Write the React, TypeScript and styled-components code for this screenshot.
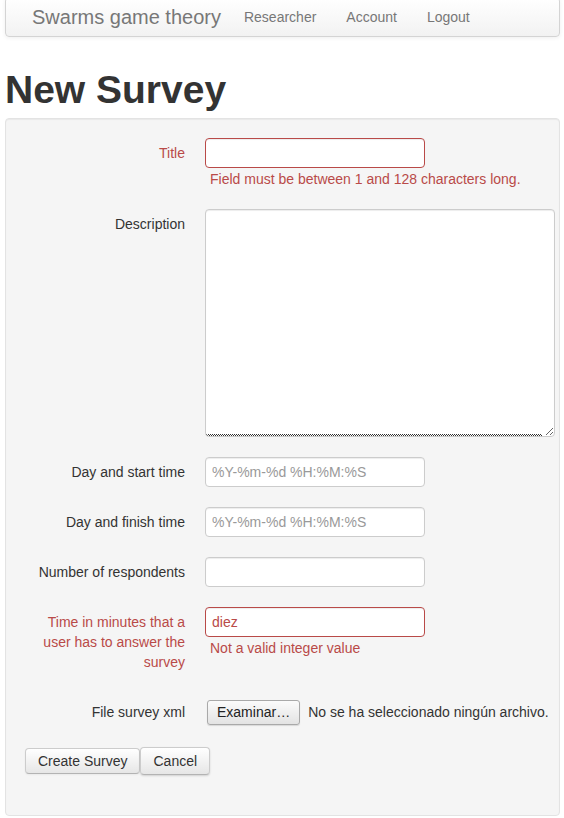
import React from "react";
import styled, { createGlobalStyle } from "styled-components";

const Global = createGlobalStyle`
  html, body { margin: 0; padding: 0; background: #fff; }
  body {
    font-family: "Liberation Sans", Arial, Helvetica, sans-serif;
    font-size: 14px;
    line-height: 20px;
    color: #333;
  }
  * { box-sizing: border-box; }
`;

const Page = styled.div`
  width: 555px;
  margin-left: 5px;
`;

const Navbar = styled.nav`
  margin-top: -3px;
  height: 40px;
  display: flex;
  align-items: center;
  padding-top: 0;
  background: linear-gradient(#ffffff, #f2f2f2);
  border: 1px solid #d4d4d4;
  border-radius: 4px;
  box-shadow: 0 1px 4px rgba(0, 0, 0, 0.065);
`;

const Brand = styled.a`
  margin-left: 6px;
  padding: 0 8px 0 20px;
  font-size: 20px;
  line-height: 20px;
  color: #777;
  text-decoration: none;
`;

const NavLink = styled.a`
  padding: 0 15px;
  font-size: 14px;
  color: #777;
  text-decoration: none;
`;

const Heading = styled.h1`
  margin: 33px 0 8px;
  font-size: 39px;
  line-height: 40px;
  font-weight: bold;
  color: #333;
`;

const Well = styled.form`
  background: #f5f5f5;
  border: 1px solid #e3e3e3;
  border-radius: 4px;
  box-shadow: inset 0 1px 1px rgba(0, 0, 0, 0.05);
  padding: 19px 19px 19px;
  min-height: 698px;
`;

const Group = styled.div<{ $pad?: number }>`
  display: grid;
  grid-template-columns: 160px 1fr;
  column-gap: 20px;
  margin-bottom: 20px;
  padding-top: ${(p) => p.$pad ?? 0}px;
`;

const Label = styled.label<{ $error?: boolean }>`
  padding-top: 5px;
  text-align: right;
  line-height: 20px;
  color: ${(p) => (p.$error ? "#b94a48" : "#333")};
`;

const Controls = styled.div`
  display: flex;
  flex-direction: column;
  align-items: flex-start;
`;

const TextInput = styled.input<{ $error?: boolean }>`
  width: 220px;
  height: 30px;
  padding: 4px 6px;
  font-family: inherit;
  font-size: 14px;
  line-height: 20px;
  color: ${(p) => (p.$error ? "#b94a48" : "#555")};
  background: #fff;
  border: 1px solid ${(p) => (p.$error ? "#b94a48" : "#ccc")};
  border-radius: 4px;
  box-shadow: inset 0 1px 1px rgba(0, 0, 0, 0.075);
  outline: none;
  &::placeholder { color: #999; }
`;

const TextArea = styled.textarea`
  width: 350px;
  height: 228px;
  padding: 4px 6px;
  font-family: inherit;
  font-size: 14px;
  color: #555;
  border: 1px solid #ccc;
  border-radius: 4px;
  box-shadow: inset 0 1px 1px rgba(0, 0, 0, 0.075);
  outline: none;
  background-color: #fff;
  background-image: repeating-linear-gradient(90deg, #333 0 1px, #fff 1px 2px),
    repeating-linear-gradient(90deg, #fff 0 1px, #333 1px 2px);
  background-size: calc(100% - 12px) 1px, calc(100% - 12px) 1px;
  background-position: left bottom 1px, left bottom;
  background-repeat: no-repeat;
`;

const Help = styled.span`
  display: block;
  margin-top: 1px;
  padding-left: 5px;
  line-height: 20px;
  color: #b94a48;
`;

const FileRow = styled.div`
  height: 30px;
  display: flex;
  align-items: center;
  gap: 8px;
  margin-left: 2px;
`;

const FileButton = styled.span`
  display: inline-flex;
  align-items: center;
  height: 25px;
  padding: 0 9px;
  font-size: 14px;
  color: #222;
  background: linear-gradient(#fbfbfb, #e3e3e3);
  border: 1px solid #a9a9a9;
  border-radius: 3px;
  box-shadow: 0 1px 1px rgba(0, 0, 0, 0.12);
`;

const FileText = styled.span`
  color: #333;
  white-space: nowrap;
`;

const Actions = styled.div`
  display: flex;
  align-items: center;
  margin-bottom: 20px;
`;

const Button = styled.button<{ $tall?: boolean }>`
  height: ${(p) => (p.$tall ? 28 : 26)}px;
  padding: 0 12px;
  font-family: inherit;
  font-size: 14px;
  line-height: 20px;
  color: #333;
  background: linear-gradient(#ffffff, #e6e6e6);
  border: 1px solid #cccccc;
  border-bottom-color: #b3b3b3;
  border-radius: 4px;
  box-shadow: inset 0 1px 0 rgba(255, 255, 255, 0.2),
    0 1px 2px rgba(0, 0, 0, ${(p) => (p.$tall ? 0.15 : 0.05)});
`;

export default function App() {
  return (
    <>
      <Global />
      <Page>
        <Navbar>
          <Brand href="#">Swarms game theory</Brand>
          <NavLink href="#">Researcher</NavLink>
          <NavLink href="#">Account</NavLink>
          <NavLink href="#">Logout</NavLink>
        </Navbar>
        <Heading>New Survey</Heading>
        <Well onSubmit={(e) => e.preventDefault()}>
          <Group>
            <Label $error>Title</Label>
            <Controls>
              <TextInput $error type="text" />
              <Help>Field must be between 1 and 128 characters long.</Help>
            </Controls>
          </Group>
          <Group>
            <Label>Description</Label>
            <Controls>
              <TextArea />
            </Controls>
          </Group>
          <Group>
            <Label>Day and start time</Label>
            <Controls>
              <TextInput type="text" placeholder="%Y-%m-%d %H:%M:%S" />
            </Controls>
          </Group>
          <Group>
            <Label>Day and finish time</Label>
            <Controls>
              <TextInput type="text" placeholder="%Y-%m-%d %H:%M:%S" />
            </Controls>
          </Group>
          <Group>
            <Label>Number of respondents</Label>
            <Controls>
              <TextInput type="text" />
            </Controls>
          </Group>
          <Group>
            <Label $error>Time in minutes that a user has to answer the survey</Label>
            <Controls>
              <TextInput $error type="text" defaultValue="diez" />
              <Help>Not a valid integer value</Help>
            </Controls>
          </Group>
          <Group $pad={5}>
            <Label>File survey xml</Label>
            <Controls>
              <FileRow>
                <FileButton>Examinar…</FileButton>
                <FileText>No se ha seleccionado ningún archivo.</FileText>
              </FileRow>
            </Controls>
          </Group>
          <Actions>
            <Button type="submit">Create Survey</Button>
            <Button $tall type="button">Cancel</Button>
          </Actions>
        </Well>
      </Page>
    </>
  );
}
